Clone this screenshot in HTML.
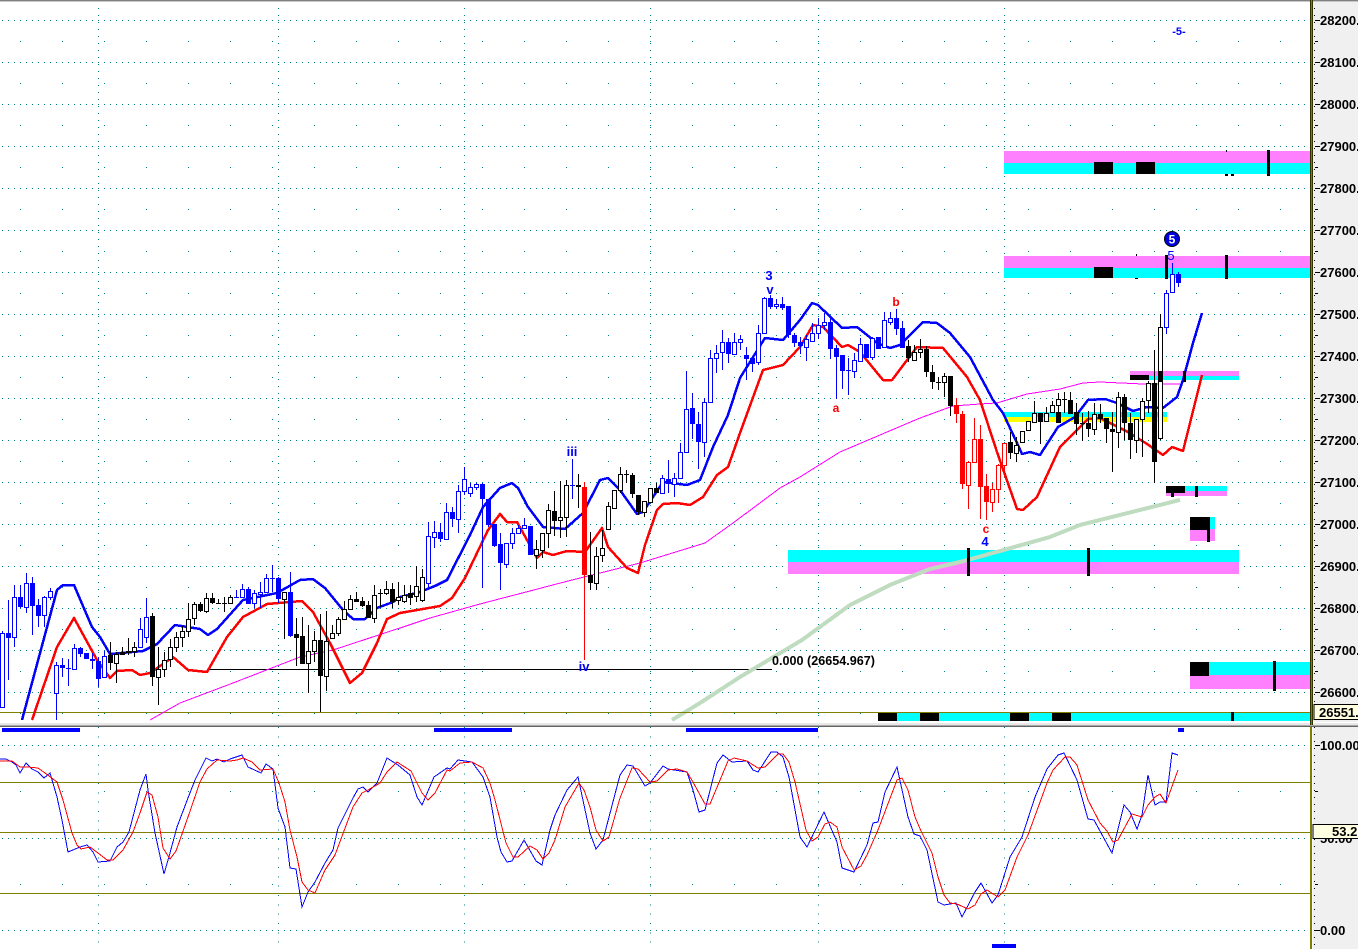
<!DOCTYPE html>
<html lang="en">
<head>
<meta charset="utf-8">
<title>Chart</title>
<style>
html,body{margin:0;padding:0;background:#fff;width:1358px;height:949px;overflow:hidden}
svg{display:block;position:absolute;left:0;top:0}
text{font-family:"Liberation Sans",sans-serif;font-weight:bold}
.ax{font-size:13px;fill:#000}
</style>
</head>
<body>
<svg width="1358" height="949" viewBox="0 0 1358 949" xmlns="http://www.w3.org/2000/svg" shape-rendering="crispEdges">
<rect width="1358" height="949" fill="#fff"/>
<rect x="1313" width="45" height="949" fill="#f0f0f0"/>
<!-- grid -->
<g fill="none" stroke="#008080" stroke-width="1">
<path stroke-dasharray="1 5" d="M2 20.5H1310M2 62.5H1310M2 104.5H1310M2 146.5H1310M2 188.5H1310M2 230.5H1310M2 272.5H1310M2 314.5H1310M2 356.5H1310M2 398.5H1310M2 440.5H1310M2 482.5H1310M2 524.5H1310M2 566.5H1310M2 608.5H1310M2 650.5H1310M2 692.5H1310M2 745.5H1310M2 838.5H1310M2 930.5H1310"/>
<path stroke-dasharray="1 41" d="M20 41.5H1310M20 83.5H1310M20 125.5H1310M20 167.5H1310M20 209.5H1310M20 251.5H1310M20 293.5H1310M20 335.5H1310M20 377.5H1310M20 419.5H1310M20 461.5H1310M20 503.5H1310M20 545.5H1310M20 587.5H1310M20 629.5H1310M20 671.5H1310M20 713.5H1310M20 791.5H1310M20 884.5H1310"/>
<path stroke-dasharray="1 6" d="M98.5 1V722M278.5 1V722M464.5 1V722M650.5 1V722M818.5 1V722M1004.5 1V722"/>
<path stroke-dasharray="1 8.33" d="M98.5 727V949M278.5 727V949M464.5 727V949M650.5 727V949M818.5 727V949M1004.5 727V949"/>
</g>
<path stroke="#000" stroke-dasharray="1 6" fill="none" d="M1314.5 1V722M1314.5 727V949"/>
<!-- fib line -->
<rect x="207" y="669" width="565" height="1" fill="#000"/>
<!-- bands -->
<g fill="#ff80ff">
<rect x="1004" y="151" width="306" height="12"/>
<rect x="1004" y="256" width="306" height="12"/>
<rect x="1130" y="371" width="109" height="5"/>
<rect x="1166" y="491" width="61" height="5"/>
<rect x="1190" y="529" width="25" height="12"/>
<rect x="788" y="562" width="451" height="12"/>
<rect x="1190" y="675" width="120" height="14"/>
</g>
<g fill="#00ffff">
<rect x="1004" y="163" width="306" height="11"/>
<rect x="1004" y="268" width="306" height="10"/>
<rect x="1130" y="376" width="109" height="4"/>
<rect x="1004" y="412" width="163" height="5"/>
<rect x="1166" y="486" width="61" height="5"/>
<rect x="1190" y="517" width="25" height="12"/>
<rect x="788" y="550" width="451" height="12"/>
<rect x="1190" y="662" width="120" height="13"/>
<rect x="878" y="713" width="432" height="8"/>
</g>
<rect x="1004" y="417" width="163" height="5" fill="#ffff00"/>
<!-- band blocks -->
<g fill="#000">
<rect x="1094" y="162" width="19" height="12"/>
<rect x="1136" y="162" width="19" height="12"/>
<rect x="1094" y="267" width="19" height="11"/>
<rect x="1130" y="375" width="19" height="5"/>
<rect x="1166" y="486" width="19" height="7"/>
<rect x="1190" y="517" width="19" height="13"/>
<rect x="1190" y="662" width="19" height="14"/>
<rect x="878" y="713" width="19" height="8"/>
<rect x="920" y="713" width="19" height="8"/>
<rect x="1010" y="713" width="19" height="8"/>
<rect x="1052" y="713" width="19" height="8"/>
</g>
<!-- green MA -->
<path fill="none" stroke="#c0dcc0" stroke-width="4" stroke-linejoin="round" d="M672 720L700 703L740 677L802 640L850 605L890 585L930 569L960 562L1000 551L1050 537L1080 525L1140 510L1180 500"/>
<!-- olive main line -->
<rect x="0" y="712" width="1310" height="1" fill="#808000"/>
<!-- magenta MA -->
<path fill="none" stroke="#ff00ff" stroke-width="1" d="M150 720L180 703L233 683L300 657L333 650L400 628L430 618L480 604L572 580L640 563L705 543L733 523L780 488L800 477L840 452L880 435L920 418L953 406L980 404L997 403L1027 394L1060 389L1083 383L1100 382L1143 384L1180 384"/>
<!-- red MA -->
<path fill="none" stroke="#ff0000" stroke-width="2.5" stroke-linejoin="round" d="M32 720L57 647L74 618L97 660L110 678L117 671L132 670L140 675L150 673L173 657L188 670L207 672L227 637L243 617L267 604L302 601L313 612L330 643L350 683L362 673L377 643L387 619L400 613L440 606L452 598L465 578L488 530L500 514L507 522L517 522L537 558L543 552L553 555L567 551L585 552L602 528L608 547L627 568L638 573L645 545L657 510L663 504L677 503L690 505L703 497L717 475L728 467L740 433L763 370L783 365L800 347L813 325L823 327L842 347L848 345L860 352L883 380L892 380L917 347L943 348L967 377L980 400L997 452L1017 509L1023 510L1037 497L1060 447L1088 419L1100 418L1128 432L1147 444L1163 455L1172 447L1183 451L1202 375"/>
<!-- blue MA -->
<path fill="none" stroke="#0000ff" stroke-width="2.5" stroke-linejoin="round" d="M22 720L57 590L63 585L74 585L92 627L100 637L110 654L143 651L157 644L175 625L200 629L208 635L217 629L243 600L277 593L300 580L313 579L325 588L343 610L353 619L365 619L377 608L393 602L400 597L420 592L435 586L447 580L470 535L483 507L500 488L512 483L518 488L528 507L543 527L565 529L583 513L600 480L608 478L620 490L637 514L643 512L663 482L687 485L700 480L713 447L728 415L740 378L765 338L783 340L800 320L812 303L818 305L842 328L857 327L877 343L890 348L900 345L923 322L937 323L950 333L970 357L993 400L1003 413L1017 443L1022 454L1030 452L1040 455L1058 427L1075 417L1088 400L1105 399L1117 403L1133 411L1147 407L1163 408L1177 397L1183 380L1193 343L1202 313"/>
<!-- blue candles -->
<path fill="none" stroke="#0000ff" d="M2.5 631V707M8.5 600V680M14.5 585V647M20.5 585V608M26.5 573V613M32.5 577V635M38.5 599V627M44.5 596V627M50.5 588V600M56.5 662V720M62.5 658V677M68.5 659V686M74.5 644V669M80.5 647V657M86.5 653V659M92.5 653V669M98.5 657V687M104.5 651V677M140.5 618V647M146.5 598V643M236.5 590V597M242.5 584V597M248.5 587V604M254.5 590V608M260.5 582V608M266.5 574V593M272.5 565V592M278.5 577V603M290.5 572V637M428.5 522V590M434.5 521V548M440.5 523V542M446.5 503V539M452.5 507V527M458.5 485V533M464.5 467V495M470.5 483V497M476.5 483V490M482.5 483V588M488.5 499V527M494.5 524V547M500.5 533V590M506.5 543V568M512.5 528V549M518.5 525V533M524.5 518V528M530.5 526V555M572.5 459V499M662.5 475V493M668.5 460V493M674.5 473V497M680.5 443V478M686.5 371V452M692.5 393V439M698.5 412V469M704.5 398V457M710.5 350V403M716.5 345V373M722.5 330V370M728.5 338V363M734.5 333V354M740.5 335V350M746.5 347V380M752.5 358V372M758.5 325V365M764.5 297V333M770.5 295V309M776.5 299V309M782.5 297V310M788.5 306V338M794.5 333V347M800.5 337V354M806.5 335V361M812.5 323V341M818.5 318V339M824.5 313V330M830.5 318V359M836.5 345V399M842.5 355V389M848.5 358V395M854.5 353V378M860.5 338V361M866.5 344V358M872.5 337V360M878.5 337V349M884.5 312V347M890.5 312V325M896.5 309V335M902.5 321V348M1166.5 290V334M1172.5 263V292M1178.5 272V287"/>
<!-- black wicks -->
<path fill="none" stroke="#000" d="M110.5 642V670M116.5 652V683M122.5 647V655M128.5 638V655M134.5 642V657M152.5 613V686M158.5 647V705M164.5 652V677M170.5 639V667M176.5 632V652M182.5 626V647M188.5 603V637M194.5 602V625M200.5 602V612M206.5 593V613M212.5 593V604M218.5 599V604M224.5 597V612M230.5 595V604M284.5 592V639M296.5 618V666M302.5 617V664M308.5 625V693M314.5 631V662M320.5 614V712M326.5 611V691M332.5 625V638M338.5 617V636M344.5 601V619M350.5 595V610M356.5 592V602M362.5 597V607M368.5 601V618M374.5 585V623M380.5 589V607M386.5 581V595M392.5 583V608M398.5 582V605M404.5 585V603M410.5 585V605M416.5 566V602M422.5 569V602M536.5 540V569M542.5 533V558M548.5 504V548M554.5 491V536M560.5 481V538M566.5 480V537M578.5 474V508M590.5 532V590M596.5 547V590M602.5 530V562M608.5 502V529M614.5 490V509M620.5 467V493M626.5 470V483M632.5 473V498M638.5 495V515M644.5 501V517M650.5 488V502M656.5 483V493M908.5 340V362M914.5 345V360M920.5 339V358M926.5 346V377M932.5 365V389M938.5 377V390M944.5 373V397M950.5 376V416M1010.5 432V459M1016.5 437V462M1022.5 431V443M1028.5 421V430M1034.5 401V422M1040.5 413V444M1046.5 407V421M1052.5 401V412M1058.5 393V423M1064.5 392V413M1070.5 392V414M1076.5 403V435M1082.5 413V441M1088.5 411V437M1094.5 403V435M1100.5 404V423M1106.5 418V443M1112.5 412V472M1118.5 392V448M1124.5 394V440M1130.5 413V459M1136.5 419V453M1142.5 398V457M1148.5 381V413M1154.5 350V483M1160.5 314V440"/>
<!-- red wicks -->
<path fill="none" stroke="#ff0000" d="M584.5 482V660M956.5 398V423M962.5 411V489M968.5 461V509M974.5 418V462M980.5 425V519M986.5 474V520M992.5 483V512M998.5 464V503M1004.5 443V477"/>
<!-- hollow bodies -->
<path fill="#fff" stroke="#0000ff" d="M.5 633.5V707.5H4.5V633.5zM12.5 597.5V637.5H16.5V597.5zM24.5 583.5V607.5H28.5V583.5zM42.5 597.5V615.5H46.5V597.5zM48.5 591.5V597.5H52.5V591.5zM54.5 665.5V693.5H58.5V665.5zM72.5 648.5V669.5H76.5V648.5zM102.5 656.5V677.5H106.5V656.5zM138.5 629.5V647.5H142.5V629.5zM144.5 617.5V637.5H148.5V617.5zM240.5 589.5V597.5H244.5V589.5zM252.5 593.5V603.5H256.5V593.5zM258.5 592.5V594.5H262.5V592.5zM264.5 578.5V592.5H268.5V578.5zM426.5 536.5V583.5H430.5V536.5zM432.5 532.5V537.5H436.5V532.5zM444.5 512.5V539.5H448.5V512.5zM456.5 491.5V519.5H460.5V491.5zM462.5 479.5V491.5H466.5V479.5zM468.5 487.5V493.5H472.5V487.5zM474.5 484.5V487.5H478.5V484.5zM504.5 543.5V564.5H508.5V543.5zM510.5 533.5V543.5H514.5V533.5zM516.5 528.5V533.5H520.5V528.5zM522.5 525.5V528.5H526.5V525.5zM660.5 478.5V493.5H664.5V478.5zM672.5 478.5V484.5H676.5V478.5zM678.5 452.5V478.5H682.5V452.5zM684.5 409.5V452.5H688.5V409.5zM702.5 402.5V442.5H706.5V402.5zM708.5 358.5V402.5H712.5V358.5zM714.5 353.5V358.5H718.5V353.5zM720.5 342.5V352.5H724.5V342.5zM732.5 342.5V354.5H736.5V342.5zM738.5 339.5V342.5H742.5V339.5zM756.5 333.5V362.5H760.5V333.5zM762.5 298.5V333.5H766.5V298.5zM774.5 304.5V306.5H778.5V304.5zM804.5 339.5V347.5H808.5V339.5zM810.5 333.5V341.5H814.5V333.5zM816.5 325.5V333.5H820.5V325.5zM822.5 322.5V325.5H826.5V322.5zM852.5 360.5V371.5H856.5V360.5zM858.5 344.5V361.5H862.5V344.5zM870.5 338.5V357.5H874.5V338.5zM882.5 320.5V347.5H886.5V320.5zM888.5 318.5V322.5H892.5V318.5zM1164.5 293.5V327.5H1168.5V293.5zM1170.5 274.5V292.5H1174.5V274.5z"/>
<path fill="#fff" stroke="#000" d="M114.5 654.5V663.5H118.5V654.5zM132.5 647.5V651.5H136.5V647.5zM156.5 669.5V677.5H160.5V669.5zM162.5 660.5V669.5H166.5V660.5zM168.5 647.5V659.5H172.5V647.5zM174.5 637.5V647.5H178.5V637.5zM180.5 631.5V637.5H184.5V631.5zM186.5 619.5V631.5H190.5V619.5zM192.5 604.5V618.5H196.5V604.5zM204.5 598.5V611.5H208.5V598.5zM228.5 597.5V603.5H232.5V597.5zM282.5 592.5V599.5H286.5V592.5zM306.5 651.5V663.5H310.5V651.5zM312.5 640.5V651.5H316.5V640.5zM324.5 641.5V676.5H328.5V641.5zM330.5 633.5V638.5H334.5V633.5zM336.5 619.5V633.5H340.5V619.5zM342.5 609.5V619.5H346.5V609.5zM348.5 599.5V609.5H352.5V599.5zM372.5 595.5V618.5H376.5V595.5zM384.5 589.5V593.5H388.5V589.5zM396.5 597.5V600.5H400.5V597.5zM402.5 595.5V601.5H406.5V595.5zM414.5 586.5V596.5H418.5V586.5zM420.5 577.5V600.5H424.5V577.5zM534.5 549.5V555.5H538.5V549.5zM540.5 533.5V550.5H544.5V533.5zM546.5 510.5V533.5H550.5V510.5zM558.5 517.5V520.5H562.5V517.5zM564.5 485.5V517.5H568.5V485.5zM594.5 556.5V583.5H598.5V556.5zM600.5 548.5V555.5H604.5V548.5zM606.5 506.5V529.5H610.5V506.5zM612.5 490.5V508.5H616.5V490.5zM618.5 474.5V490.5H622.5V474.5zM642.5 501.5V512.5H646.5V501.5zM648.5 488.5V502.5H652.5V488.5zM912.5 352.5V360.5H916.5V352.5zM918.5 349.5V352.5H922.5V349.5zM942.5 376.5V382.5H946.5V376.5zM1014.5 445.5V453.5H1018.5V445.5zM1020.5 431.5V442.5H1024.5V431.5zM1026.5 421.5V430.5H1030.5V421.5zM1032.5 413.5V422.5H1036.5V413.5zM1044.5 413.5V421.5H1048.5V413.5zM1050.5 405.5V412.5H1054.5V405.5zM1056.5 399.5V405.5H1060.5V399.5zM1092.5 414.5V429.5H1096.5V414.5zM1116.5 397.5V432.5H1120.5V397.5zM1134.5 419.5V440.5H1138.5V419.5zM1140.5 401.5V419.5H1144.5V401.5zM1146.5 383.5V400.5H1150.5V383.5zM1158.5 327.5V438.5H1162.5V327.5z"/>
<path fill="#fff" stroke="#ff0000" d="M966.5 462.5V485.5H970.5V462.5zM972.5 439.5V462.5H976.5V439.5zM990.5 489.5V502.5H994.5V489.5zM996.5 465.5V489.5H1000.5V465.5zM1002.5 443.5V465.5H1006.5V443.5z"/>
<!-- filled bodies -->
<path fill="#0000ff" d="M6 633V638H11V633zM18 597V607H23V597zM30 583V606H35V583zM36 605V616H41V605zM60 665V668H65V665zM66 668V669H71V668zM78 648V654H83V648zM84 653V659H89V653zM90 659V661H95V659zM96 661V679H101V661zM234 597V598H239V597zM246 589V604H251V589zM270 578V579H275V578zM276 578V599H281V578zM288 592V636H293V592zM438 532V539H443V532zM450 512V519H455V512zM480 484V499H485V484zM486 499V525H491V499zM492 524V546H497V524zM498 544V563H503V544zM528 526V555H533V526zM570 485V486H575V485zM666 479V484H671V479zM690 408V424H695V408zM696 424V442H701V424zM726 342V354H731V342zM744 355V359H749V355zM750 358V364H755V358zM768 298V307H773V298zM780 304V308H785V304zM786 306V335H791V306zM792 335V343H797V335zM798 342V346H803V342zM828 322V349H833V322zM834 348V357H839V348zM840 355V371H845V355zM846 370V371H851V370zM864 344V358H869V344zM876 337V349H881V337zM894 318V329H899V318zM900 328V348H905V328zM1176 274V283H1181V274z"/>
<path fill="#000" d="M108 655V663H113V655zM120 652V655H125V652zM126 651V653H131V651zM150 616V677H155V616zM198 604V611H203V604zM210 598V603H215V598zM216 603V604H221V603zM222 603V604H227V603zM294 634V638H299V634zM300 636V664H305V636zM318 640V676H323V640zM354 599V602H359V599zM360 601V606H365V601zM366 605V618H371V605zM378 593V594H383V593zM390 589V602H395V589zM408 593V598H413V593zM552 511V521H557V511zM576 485V487H581V485zM588 575V583H593V575zM624 474V475H629V474zM630 475V494H635V475zM636 495V512H641V495zM654 488V493H659V488zM906 346V358H911V346zM924 349V372H929V349zM930 372V382H935V372zM936 382V383H941V382zM948 376V406H953V376zM1008 442V453H1013V442zM1038 413V422H1043V413zM1056 412V423H1061V412zM1062 399V400H1067V399zM1068 400V414H1073V400zM1074 412V424H1079V412zM1080 423V424H1085V423zM1086 423V429H1091V423zM1098 414V419H1103V414zM1104 418V429H1109V418zM1110 429V432H1115V429zM1122 397V423H1127V397zM1128 423V440H1133V423zM1152 383V462H1157V383z"/>
<path fill="#ff0000" d="M582 487V575H587V487zM954 405V414H959V405zM960 414V484H965V414zM978 439V487H983V439zM984 486V502H989V486z"/>
<!-- black ticks on bands -->
<g fill="#000">
<rect x="1267" y="150" width="3" height="26"/>
<rect x="1165" y="255" width="3" height="24"/>
<rect x="1225" y="255" width="3" height="24"/>
<rect x="1159" y="371" width="3" height="11"/>
<rect x="1183" y="371" width="3" height="11"/>
<rect x="1171" y="486" width="3" height="11"/>
<rect x="1195" y="486" width="3" height="11"/>
<rect x="1207" y="517" width="3" height="25"/>
<rect x="967" y="548" width="3" height="28"/>
<rect x="1087" y="548" width="3" height="28"/>
<rect x="1273" y="661" width="3" height="30"/>
<rect x="1231" y="712" width="3" height="9"/>
<rect x="1136" y="254" width="1" height="2"/>
<rect x="1135" y="278" width="3" height="1"/>
<rect x="1226" y="150" width="1" height="2"/>
<rect x="1225" y="174" width="3" height="2"/>
<rect x="1231" y="174" width="3" height="2"/>
</g>
<!-- separator -->
<rect x="0" y="722" width="1358" height="1" fill="#fff"/>
<rect x="0" y="723" width="1358" height="2" fill="#e8e8e8"/>
<rect x="0" y="725" width="1358" height="1" fill="#a8a8a8"/>
<rect x="0" y="726" width="1358" height="1" fill="#666"/>
<!-- top line -->
<rect x="0" y="0" width="1358" height="1" fill="#808080"/>
<rect x="0" y="1" width="1358" height="1" fill="#c8c8c8"/>
<!-- axis lines -->
<rect x="1310" y="0" width="1" height="725" fill="#333300"/>
<rect x="1311" y="0" width="1" height="725" fill="#808000"/>
<rect x="1312" y="0" width="1" height="725" fill="#333300"/>
<rect x="1310" y="727" width="2" height="222" fill="#808000"/>
<!-- stochastic pane -->
<g fill="#808000">
<rect x="0" y="782" width="1310" height="1"/>
<rect x="0" y="832" width="1310" height="1"/>
<rect x="0" y="893" width="1310" height="1"/>
</g>
<g fill="#0000ff">
<rect x="2" y="728" width="78" height="4"/>
<rect x="434" y="728" width="78" height="4"/>
<rect x="686" y="728" width="132" height="4"/>
<rect x="1178" y="728" width="6" height="4"/>
<rect x="992" y="944" width="24" height="4"/>
</g>
<path fill="none" stroke="#0000ff" stroke-width="1" d="M0 759L6 759L12 762L16 765L20 773L26 763L32 769L38 772L44 778L50 773L57 797L62 820L68 852L80 847L87 845L93 852L98 862L110 861L117 847L123 842L129 832L140 790L146 774L148 790L155 833L164 874L170 853L177 827L188 798L195 780L206 758L212 761L217 759L224 762L230 759L242 755L248 767L261 773L266 764L273 769L278 808L285 827L290 868L296 869L302 907L308 892L315 882L325 863L333 850L338 828L353 798L358 789L363 787L368 792L377 783L387 758L398 765L410 775L417 797L422 805L434 777L447 768L450 769L458 760L472 762L483 777L490 797L497 837L501 852L507 862L512 861L524 840L536 861L542 865L550 830L555 815L567 790L578 777L590 833L596 849L603 840L620 775L627 765L633 766L645 786L650 783L663 766L668 769L687 772L693 790L699 812L705 810L717 763L723 755L732 762L747 761L753 770L758 772L771 752L777 752L783 757L789 777L800 837L807 847L824 812L837 842L842 868L854 872L867 845L873 823L878 822L885 792L897 767L908 817L914 834L920 836L927 850L938 902L944 905L956 903L962 917L975 892L981 883L992 903L998 895L1010 857L1022 837L1035 797L1047 769L1058 755L1064 753L1077 780L1088 819L1094 820L1112 853L1124 805L1130 812L1137 829L1142 815L1148 775L1155 805L1160 802L1166 802L1172 753L1178 755"/>
<path fill="none" stroke="#ff0000" stroke-width="1" d="M0 761L12 761L20 767L27 767L38 768L45 773L57 782L63 800L72 833L77 845L81 849L90 847L98 853L107 860L113 860L123 850L133 832L140 813L147 792L152 795L158 817L163 848L170 859L176 851L188 817L200 782L207 769L217 760L230 761L237 760L243 758L252 762L260 770L273 769L279 783L285 802L290 830L297 857L302 882L308 890L315 893L325 870L335 855L353 807L362 793L368 790L380 783L387 772L397 762L411 771L422 793L428 800L435 793L447 770L450 771L460 763L472 762L483 768L490 783L495 800L506 843L513 857L518 857L530 846L537 850L543 859L549 853L555 840L565 807L579 783L584 790L590 807L596 830L603 841L609 837L620 798L632 768L638 769L650 782L657 781L668 770L677 769L687 772L693 782L705 804L710 804L728 761L734 758L747 761L758 768L765 767L778 754L783 754L789 762L795 782L806 830L812 841L818 837L825 824L830 822L837 827L842 847L854 870L861 866L867 855L878 830L897 780L902 778L908 790L915 817L921 831L932 853L938 877L944 895L950 903L957 904L968 909L975 905L981 894L987 890L998 897L1005 890L1017 857L1028 835L1047 783L1053 770L1065 757L1070 757L1077 765L1088 800L1100 823L1107 831L1113 842L1118 840L1132 814L1142 817L1148 805L1155 797L1160 794L1166 803L1178 770"/>
<!-- axis ticks -->
<path stroke="#000" fill="none" d="M1315 20.5H1320M1315 62.5H1320M1315 104.5H1320M1315 146.5H1320M1315 188.5H1320M1315 230.5H1320M1315 272.5H1320M1315 314.5H1320M1315 356.5H1320M1315 398.5H1320M1315 440.5H1320M1315 482.5H1320M1315 524.5H1320M1315 566.5H1320M1315 608.5H1320M1315 650.5H1320M1315 692.5H1320M1315 41.5H1318M1315 83.5H1318M1315 125.5H1318M1315 167.5H1318M1315 209.5H1318M1315 251.5H1318M1315 293.5H1318M1315 335.5H1318M1315 377.5H1318M1315 419.5H1318M1315 461.5H1318M1315 503.5H1318M1315 545.5H1318M1315 587.5H1318M1315 629.5H1318M1315 671.5H1318M1315 745.5H1320M1315 930.5H1320M1315 791.5H1318M1315 884.5H1318"/>
<g shape-rendering="auto">
<text class="ax" x="1320" y="25">28200.</text>
<text class="ax" x="1320" y="67">28100.</text>
<text class="ax" x="1320" y="109">28000.</text>
<text class="ax" x="1320" y="151">27900.</text>
<text class="ax" x="1320" y="193">27800.</text>
<text class="ax" x="1320" y="235">27700.</text>
<text class="ax" x="1320" y="277">27600.</text>
<text class="ax" x="1320" y="319">27500.</text>
<text class="ax" x="1320" y="361">27400.</text>
<text class="ax" x="1320" y="403">27300.</text>
<text class="ax" x="1320" y="445">27200.</text>
<text class="ax" x="1320" y="487">27100.</text>
<text class="ax" x="1320" y="529">27000.</text>
<text class="ax" x="1320" y="571">26900.</text>
<text class="ax" x="1320" y="613">26800.</text>
<text class="ax" x="1320" y="655">26700.</text>
<text class="ax" x="1320" y="697">26600.</text>
<text class="ax" x="1320" y="750">100.00</text>
<text class="ax" x="1320" y="843">50.00</text>
<text class="ax" x="1320" y="935">0.00</text>
</g>
<!-- price labels -->
<rect x="1314" y="704.5" width="45" height="15" fill="#ffffe1" stroke="#000"/>
<rect x="1313" y="824.5" width="46" height="14" fill="#ffffe1" stroke="#000"/>
<g shape-rendering="auto">
<text x="1319" y="717" font-size="13" fill="#000">26551.</text>
<text x="1332" y="836" font-size="13" fill="#000">53.2</text>
<text x="772" y="665" font-size="12.6" fill="#000">0.000 (26654.967)</text>
<text x="769" y="280" font-size="13" fill="#0000ff" text-anchor="middle">3</text>
<text x="770" y="294" font-size="13" fill="#0000ff" text-anchor="middle">v</text>
<text x="572" y="456" font-size="13" fill="#0000ff" text-anchor="middle">iii</text>
<text x="584" y="671" font-size="13" fill="#0000ff" text-anchor="middle">iv</text>
<text x="836" y="412" font-size="12" fill="#ff0000" text-anchor="middle">a</text>
<text x="896" y="306" font-size="12" fill="#ff0000" text-anchor="middle">b</text>
<text x="986" y="533" font-size="12" fill="#ff0000" text-anchor="middle">c</text>
<text x="985" y="546" font-size="13" fill="#0000ff" text-anchor="middle">4</text>
<text x="1171" y="260" font-size="13" fill="#0000ff" text-anchor="middle" style="font-weight:normal">5</text>
<text x="1179" y="35" font-size="11" fill="#0000ff" text-anchor="middle">-5-</text>
<circle cx="1172" cy="239" r="7.5" fill="#0000e0" stroke="#000" stroke-width="1"/>
<text x="1172" y="243.5" font-size="12" fill="#fff" text-anchor="middle">5</text>
</g>
</svg>
</body>
</html>
